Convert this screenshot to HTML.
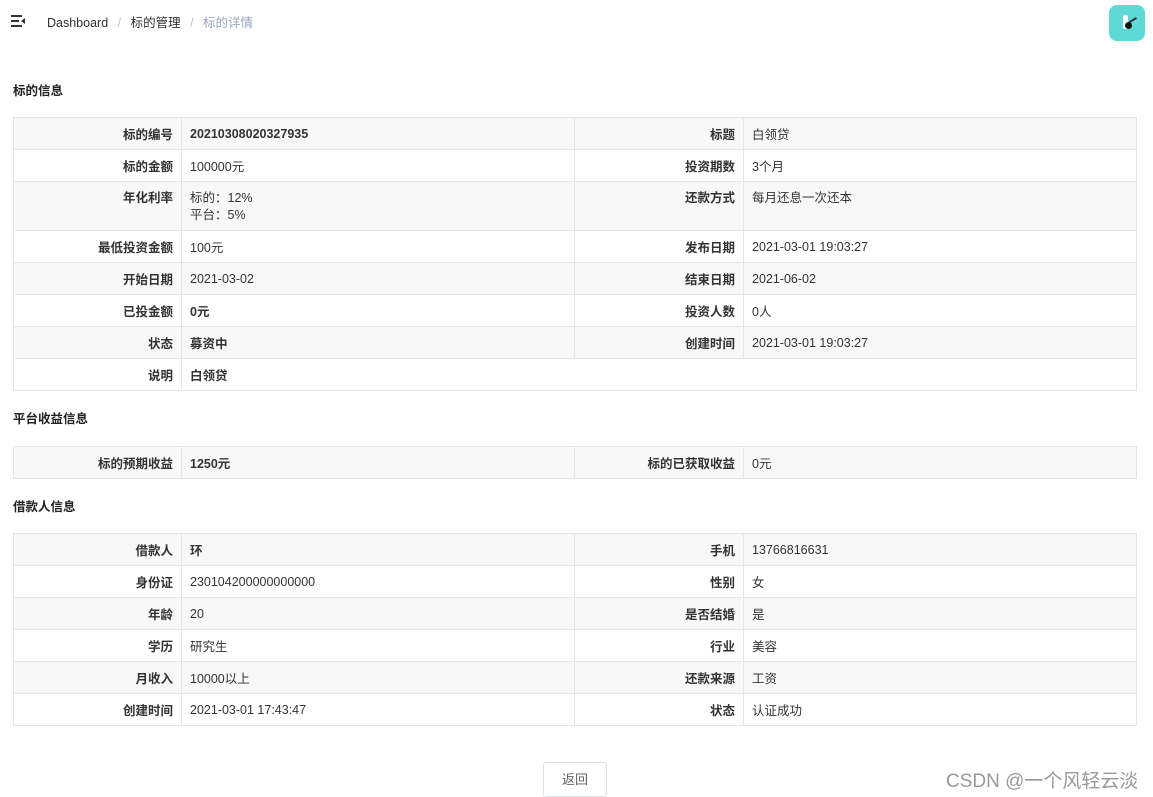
<!DOCTYPE html>
<html><head><meta charset="utf-8"><style>
*{box-sizing:border-box;margin:0;padding:0}
body{width:1153px;height:797px;background:#fff;font-family:"Liberation Sans","Noto Sans CJK SC",sans-serif;font-size:12.5px;color:#333;position:relative;overflow:hidden}
.abs{position:absolute}
h3{position:absolute;left:13px;font-size:12.5px;font-weight:bold;color:#222}
table{position:absolute;left:13px;width:1124px;border-collapse:collapse;table-layout:fixed}
td{border:1px solid #dfe6ec;padding:0 8px;height:32px;vertical-align:middle;color:#333}
td.l{text-align:right;font-weight:bold;color:#333}
tr.g td{background:#f8f8f8}
.b{font-weight:bold}
.t{vertical-align:top;padding-top:8px;line-height:17px}
</style></head><body>
<div class="abs" style="left:11px;top:15px;width:14px;height:12px">
<div class="abs" style="left:0;top:0;width:11px;height:2px;background:#333"></div>
<div class="abs" style="left:0;top:5px;width:8px;height:2px;background:#333"></div>
<div class="abs" style="left:0;top:10px;width:11px;height:2px;background:#333"></div>
<div class="abs" style="left:10px;top:3px;width:0;height:0;border-top:3px solid transparent;border-bottom:3px solid transparent;border-right:4px solid #333"></div>
</div>
<div class="abs" style="left:47px;top:12px;font-size:12.5px;color:#303133">Dashboard <span style="color:#c0c4cc;margin:0 6px">/</span> 标的管理 <span style="color:#c0c4cc;margin:0 6px">/</span> <span style="color:#97a8be">标的详情</span></div>
<div class="abs" style="left:1109px;top:5px;width:36px;height:36px;border-radius:8px;background:#5fd8d8">
<div class="abs" style="left:14px;top:10px;width:5px;height:14px;background:#fff;border-radius:2px"></div>
<div class="abs" style="left:16px;top:17px;width:7px;height:7px;background:#111;border-radius:50%"></div>
<div class="abs" style="left:20px;top:14px;width:8px;height:2px;background:#333;transform:rotate(-30deg)"></div>
</div>

<h3 style="top:80px">标的信息</h3>
<table style="top:117px">
<colgroup><col style="width:168px"><col style="width:393px"><col style="width:169px"><col></colgroup>
<tr class="g"><td class="l">标的编号</td><td class="b">20210308020327935</td><td class="l">标题</td><td>白领贷</td></tr>
<tr><td class="l">标的金额</td><td>100000元</td><td class="l">投资期数</td><td>3个月</td></tr>
<tr class="g" style="height:49px"><td class="l t">年化利率</td><td class="t">标的：12%<br>平台：5%</td><td class="l t">还款方式</td><td class="t">每月还息一次还本</td></tr>
<tr><td class="l">最低投资金额</td><td>100元</td><td class="l">发布日期</td><td>2021-03-01 19:03:27</td></tr>
<tr class="g"><td class="l">开始日期</td><td>2021-03-02</td><td class="l">结束日期</td><td>2021-06-02</td></tr>
<tr><td class="l">已投金额</td><td class="b">0元</td><td class="l">投资人数</td><td>0人</td></tr>
<tr class="g"><td class="l">状态</td><td class="b">募资中</td><td class="l">创建时间</td><td>2021-03-01 19:03:27</td></tr>
<tr><td class="l">说明</td><td class="b" colspan="3">白领贷</td></tr>
</table>

<h3 style="top:408px">平台收益信息</h3>
<table style="top:446px">
<colgroup><col style="width:168px"><col style="width:393px"><col style="width:169px"><col></colgroup>
<tr class="g"><td class="l">标的预期收益</td><td class="b">1250元</td><td class="l">标的已获取收益</td><td>0元</td></tr>
</table>

<h3 style="top:496px">借款人信息</h3>
<table style="top:533px">
<colgroup><col style="width:168px"><col style="width:393px"><col style="width:169px"><col></colgroup>
<tr class="g"><td class="l">借款人</td><td class="b">环</td><td class="l">手机</td><td>13766816631</td></tr>
<tr><td class="l">身份证</td><td>230104200000000000</td><td class="l">性别</td><td>女</td></tr>
<tr class="g"><td class="l">年龄</td><td>20</td><td class="l">是否结婚</td><td>是</td></tr>
<tr><td class="l">学历</td><td>研究生</td><td class="l">行业</td><td>美容</td></tr>
<tr class="g"><td class="l">月收入</td><td>10000以上</td><td class="l">还款来源</td><td>工资</td></tr>
<tr><td class="l">创建时间</td><td>2021-03-01 17:43:47</td><td class="l">状态</td><td>认证成功</td></tr>
</table>

<div class="abs" style="left:543px;top:762px;width:64px;height:35px;border:1px solid #dcdfe6;border-radius:3px;text-align:center;line-height:33px;font-size:13px;color:#606266">返回</div>
<div class="abs" style="left:946px;top:766px;font-size:19px;color:#999">CSDN @一个风轻云淡</div>
</body></html>
